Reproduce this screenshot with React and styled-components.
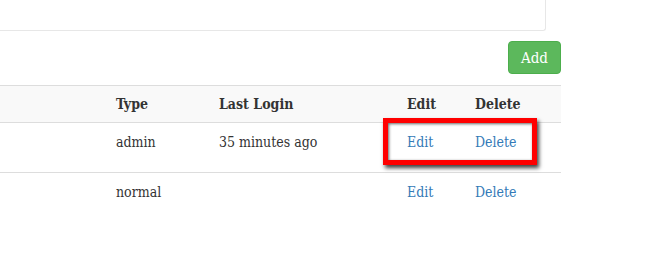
import React from "react";
import styled, { createGlobalStyle } from "styled-components";

const Global = createGlobalStyle`
  html, body { margin: 0; padding: 0; background: #fff; }
  body {
    font-family: "DejaVu Serif Condensed", "DejaVu Serif", serif;
    font-size: 14px;
    line-height: 20px;
    color: #333;
  }
`;

const Page = styled.div`
  position: relative;
  width: 561px;
`;

const TopPanel = styled.div`
  width: 545px;
  height: 30px;
  border-right: 1px solid #e7e7e7;
  border-bottom: 1px solid #e7e7e7;
  border-bottom-right-radius: 3px;
`;

const Toolbar = styled.div`
  display: flex;
  justify-content: flex-end;
  padding-top: 10px;
  margin-bottom: 11px;
`;

const AddButton = styled.button`
  font-family: inherit;
  font-size: 15px;
  line-height: 20px;
  height: 33px;
  width: 53px;
  padding: 6px 0;
  color: #fff;
  background: #5cb85c;
  border: 1px solid #4cae4c;
  border-radius: 4px;
  cursor: pointer;
`;

const Table = styled.div`
  display: grid;
  grid-template-columns: 108px 103px 188px 68px 94px;
  border-top: 1px solid #ddd;
`;

const Row = styled.div`
  display: contents;
`;

const HeadCell = styled.div`
  background: #f9f9f9;
  font-weight: bold;
  padding: 8px;
  border-bottom: 1px solid #ddd;
`;

const Cell = styled.div`
  padding: 9px 8px;
  height: ${(p) => p.$h}px;
  box-sizing: border-box;
  border-bottom: ${(p) => (p.$last ? "none" : "1px solid #ddd")};
`;

const Link = styled.a`
  color: #337ab7;
  text-decoration: none;
  cursor: pointer;
`;

const Highlight = styled.div`
  position: absolute;
  left: 383px;
  top: 118px;
  width: 154px;
  height: 47px;
  box-sizing: border-box;
  border: 5px solid #ff0000;
  box-shadow: 2px 3px 4px rgba(0, 0, 0, 0.75), inset 1px 1px 3px rgba(0, 0, 0, 0.6);
  pointer-events: none;
`;

const users = [
  { type: "admin", login: "35 minutes ago", h: 50 },
  { type: "normal", login: "", h: 40, last: true },
];

export default function App() {
  return (
    <>
      <Global />
      <Page>
        <TopPanel />
        <Toolbar>
          <AddButton>Add</AddButton>
        </Toolbar>
        <Table>
          <Row>
            <HeadCell />
            <HeadCell>Type</HeadCell>
            <HeadCell>Last Login</HeadCell>
            <HeadCell>Edit</HeadCell>
            <HeadCell>Delete</HeadCell>
          </Row>
          {users.map((u) => (
            <Row key={u.type}>
              <Cell $h={u.h} $last={u.last} />
              <Cell $h={u.h} $last={u.last}>{u.type}</Cell>
              <Cell $h={u.h} $last={u.last}>{u.login}</Cell>
              <Cell $h={u.h} $last={u.last}><Link>Edit</Link></Cell>
              <Cell $h={u.h} $last={u.last}><Link>Delete</Link></Cell>
            </Row>
          ))}
        </Table>
        <Highlight />
      </Page>
    </>
  );
}
